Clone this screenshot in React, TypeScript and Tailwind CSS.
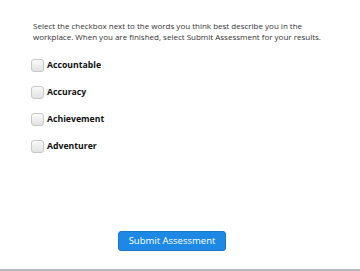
import React from "react";

const words = ["Accountable", "Accuracy", "Achievement", "Adventurer"];

export default function App() {
  return (
    <div
      className="w-[360px] h-[271px] bg-white flex flex-col border-b-2 border-[#b4b8bc]"
      style={{ fontFamily: '"Open Sans", "Noto Sans", sans-serif' }}
    >
      <div className="pl-[33px] pr-[20px] pt-[20px] flex-1">
        <p className="text-[8px] leading-[11px] text-[#333]">
          Select the checkbox next to the words you think best describe you in the
          <br />
          workplace. When you are finished, select Submit Assessment for your results.
        </p>
        <div className="mt-[17px] -ml-[2px] flex flex-col gap-[14px]">
          {words.map((w) => (
            <label key={w} className="flex items-center gap-[3px] h-[13px]">
              <span className="w-[13px] h-[13px] rounded-[3px] border border-[#c8c8c8] bg-gradient-to-b from-[#fafafa] to-[#e2e2e2]" />
              <span className="text-[8.7px] font-bold text-[#111]">{w}</span>
            </label>
          ))}
        </div>
      </div>
      <div className="flex justify-center pb-[18px]">
        <button className="h-[20px] w-[108px] rounded-[3px] bg-[#1e88e5] border border-[#1a78cc] text-white text-[9.5px] leading-none mr-[16px]">
          Submit Assessment
        </button>
      </div>
    </div>
  );
}
